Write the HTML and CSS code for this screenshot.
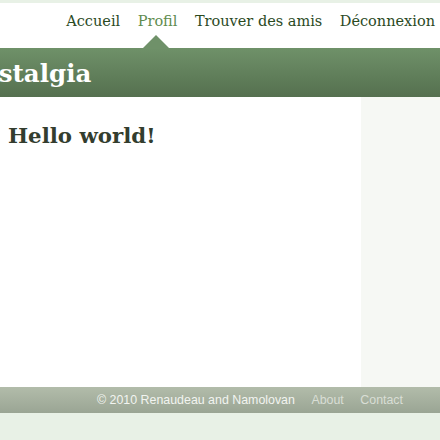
FILE: index.html
```html
<!DOCTYPE html>
<html>
<head>
<meta charset="utf-8">
<link rel="stylesheet" href="styles.css">
</head>
<body>
<div class="page">
  <nav class="topnav">
    <a class="nav-link" href="#">Accueil</a>
    <a class="nav-link active" href="#">Profil</a>
    <a class="nav-link" href="#">Trouver des amis</a>
    <a class="nav-link" href="#">Déconnexion</a>
  </nav>
  <header class="banner">
    <div class="logo">Nostalgia</div>
  </header>
  <div class="body-row">
    <main class="content">
      <h1 class="title">Hello world!</h1>
    </main>
    <aside class="sidebar"></aside>
  </div>
  <footer class="footer">
    <span class="copy">© 2010 Renaudeau and Namolovan</span>
    <a class="foot-link" href="#">About</a>
    <a class="foot-link" href="#">Contact</a>
  </footer>
</div>
</body>
</html>
```
FILE: styles.css
```css
html, body {
  margin: 0;
  padding: 0;
}
body {
  background: #e8f1e6;
  height: 440px;
  overflow: hidden;
}
.page {
  margin-top: 3px;
  background: #ffffff;
  overflow: hidden;
}
.topnav {
  height: 45px;
  display: flex;
  justify-content: flex-end;
  align-items: flex-start;
  gap: 17.5px;
  padding-right: 5px;
  box-sizing: border-box;
  padding-top: 9.5px;
  font-family: "DejaVu Serif", serif;
  font-size: 14.5px;
}
.nav-link {
  color: #2b4a1f;
  text-decoration: none;
  position: relative;
}
.nav-link.active {
  color: #5f8c4f;
}
.nav-link.active::after {
  content: "";
  position: absolute;
  left: 50%;
  margin-left: -16px;
  top: 22.5px;
  border-left: 14px solid transparent;
  border-right: 14px solid transparent;
  border-bottom: 14px solid #6f9169;
}
.banner {
  height: 49px;
  background: linear-gradient(#6f9169, #55704f);
  display: flex;
  align-items: center;
  overflow: hidden;
}
.logo {
  font-family: "DejaVu Serif", serif;
  font-weight: bold;
  font-size: 24.5px;
  color: #ffffff;
  margin-left: -40px;
  margin-top: 2px;
  white-space: nowrap;
}
.body-row {
  display: flex;
  height: 290px;
}
.content {
  flex: 1;
  padding: 0 8px;
}
.title {
  margin: 26px 0 0 0;
  font-family: "DejaVu Serif", serif;
  font-weight: bold;
  font-size: 21.3px;
  color: #333d2e;
}
.sidebar {
  width: 79px;
  background: #f6f8f4;
}
.footer {
  height: 26px;
  background: linear-gradient(#b2bcaa, #9aa594);
  display: flex;
  justify-content: flex-end;
  align-items: center;
  gap: 16.5px;
  padding-right: 37px;
  font-family: "Liberation Sans", Arial, sans-serif;
  font-size: 12.4px;
}
.copy {
  color: #f2f4f0;
}
.foot-link {
  color: #d9ded5;
  text-decoration: none;
}
```
